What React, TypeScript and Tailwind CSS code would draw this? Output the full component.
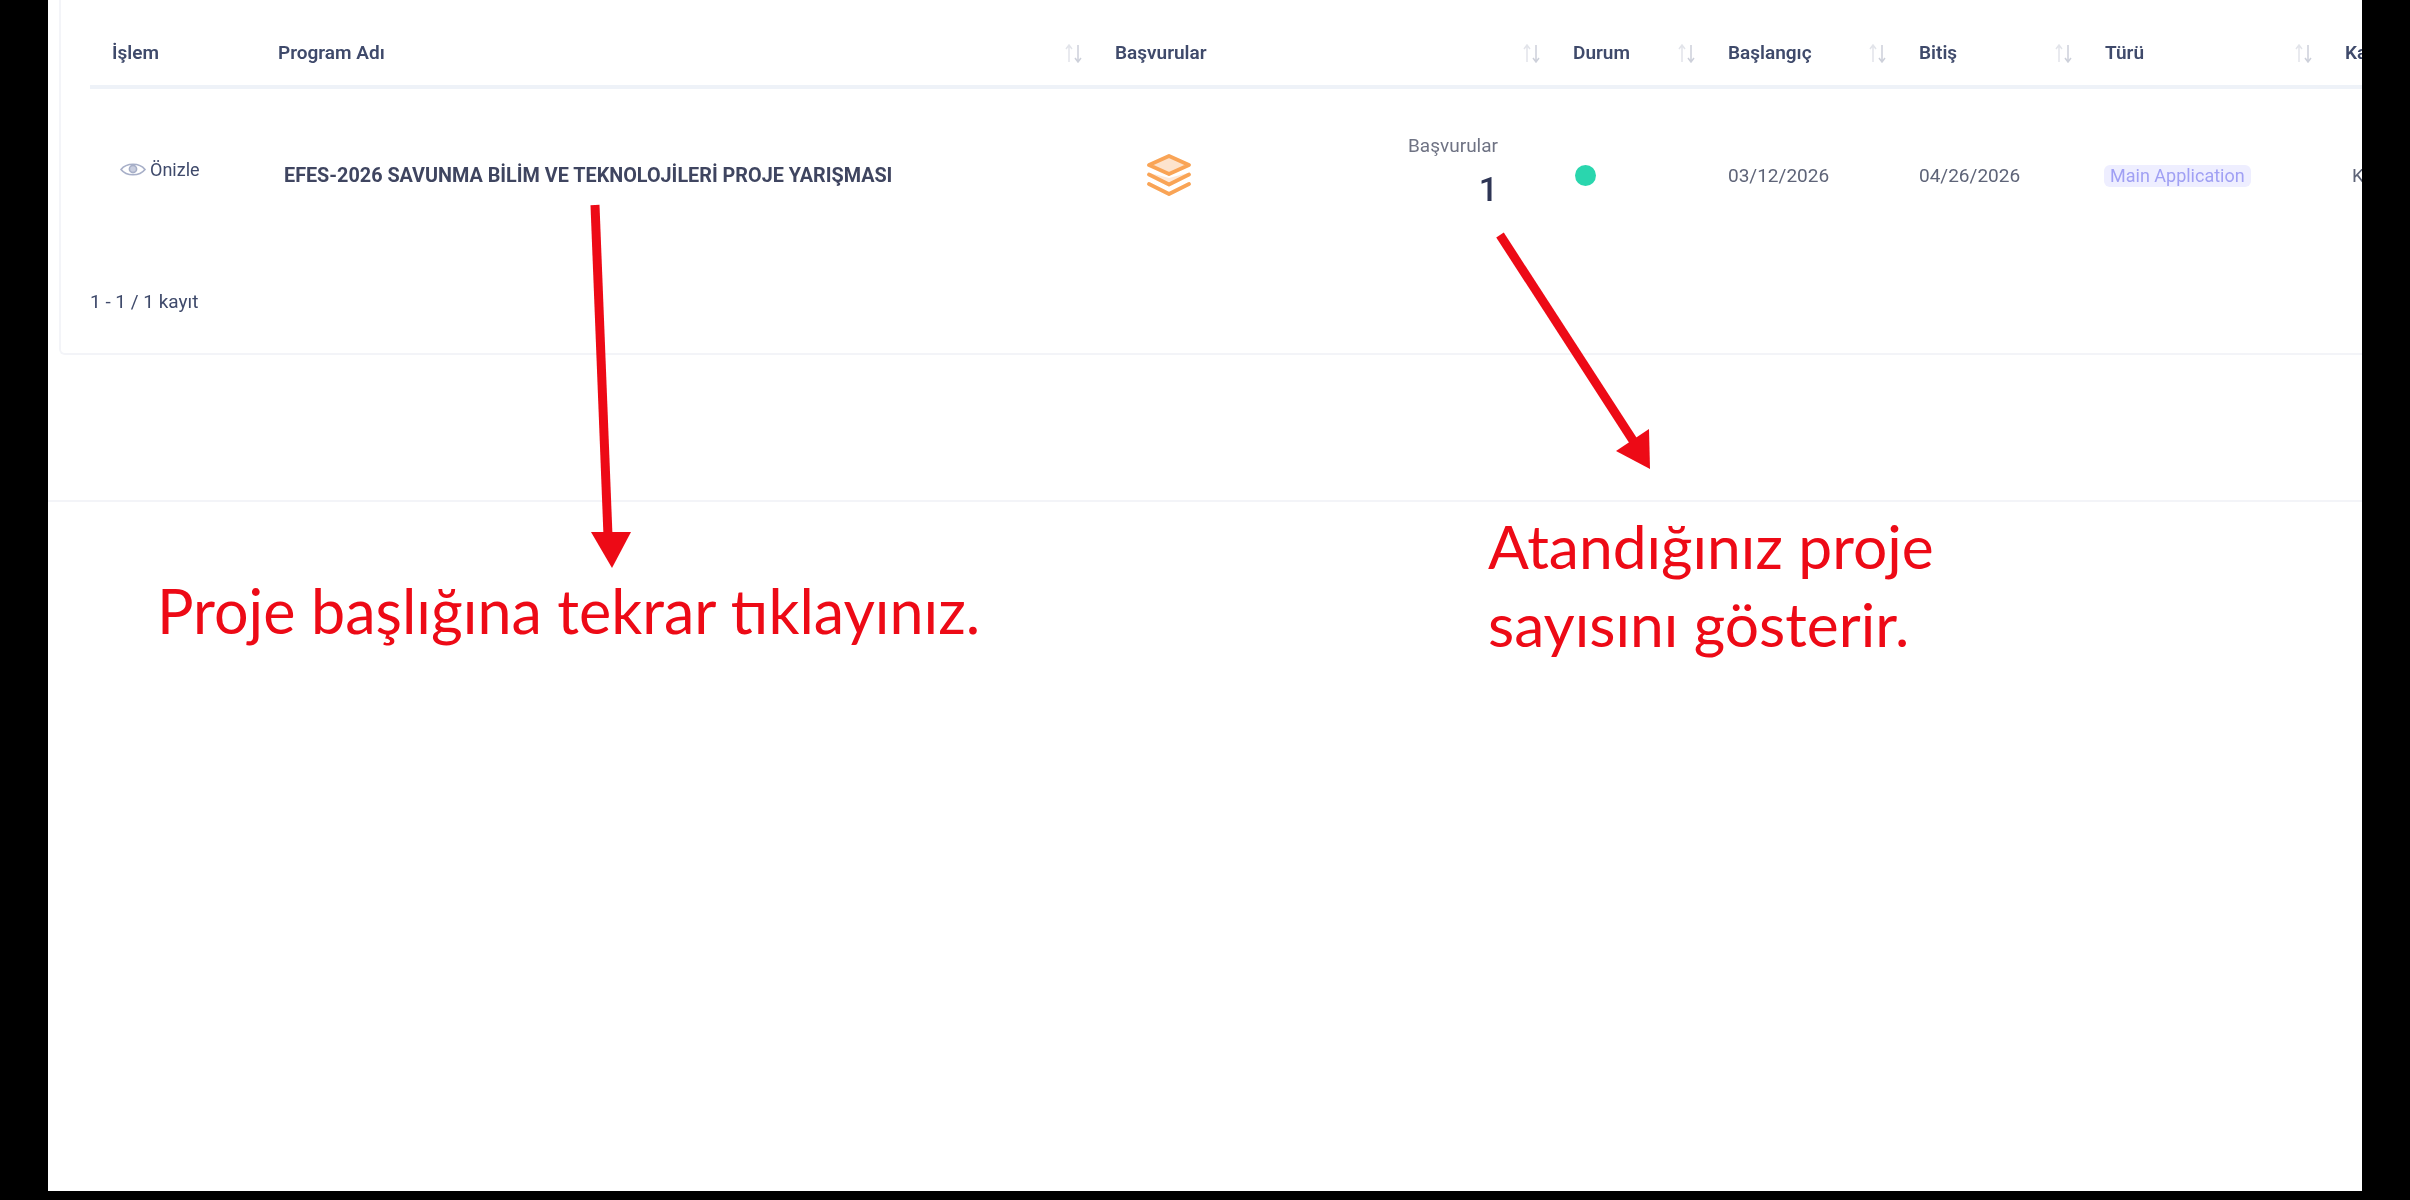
const columns = [
  { label: "İşlem", width: "w-[166px]" },
  { label: "Program Adı", width: "w-[837px]", sortable: true },
  { label: "Başvurular", width: "w-[458px]", sortable: true },
  { label: "Durum", width: "w-[155px]", sortable: true },
  { label: "Başlangıç", width: "w-[191px]", sortable: true },
  { label: "Bitiş", width: "w-[186px]", sortable: true },
  { label: "Türü", width: "w-[240px]", sortable: true },
  { label: "Ka", width: "w-[120px]" },
]

function SortIcon() {
  return (
    <svg width="18" height="19" viewBox="0 0 18 19" fill="none" strokeWidth="1.5">
      <path d="M4 18V2M1 5l3-4 3 4" stroke="#e2e4ea" />
      <path d="M13 1v16M10 14l3 4 3-4" stroke="#cdd0da" />
    </svg>
  )
}

function EyeIcon() {
  return (
    <svg width="26" height="15" viewBox="0 0 26 15" fill="none" stroke="#a7afc8">
      <path d="M1 7.5C6.5 0.5 19.5 0.5 25 7.5C19.5 14.5 6.5 14.5 1 7.5Z" strokeWidth="1.6" />
      <circle cx="13" cy="7" r="3.6" fill="#c9cedf" strokeWidth="1.6" />
    </svg>
  )
}

function LayersIcon() {
  return (
    <svg width="44" height="42" viewBox="0 0 44 42" fill="none" stroke="#f9a456" strokeWidth="3.8" strokeLinejoin="round" strokeLinecap="round">
      <path d="M22 24l-19-5 19 11 19-11z" fill="#fdeadb" stroke="none" />
      <path d="M22 2L42 11 22 20 2 11Z" fill="#fde3cd" />
      <path d="M2 20.5L22 30.5 42 20.5" />
      <path d="M2 30L22 40 42 30" />
    </svg>
  )
}

function Arrows() {
  return (
    <svg className="absolute left-[-48px] top-0 pointer-events-none" width="2410" height="1200" viewBox="0 0 2410 1200" fill="none">
      <path d="M595 205L608 536" stroke="#ed0a16" strokeWidth="9" />
      <path d="M591 532H631L612 568Z" fill="#ed0a16" />
      <path d="M1500 235L1634 442" stroke="#ed0a16" strokeWidth="9" />
      <path d="M1649 429L1650 469L1616 451Z" fill="#ed0a16" />
    </svg>
  )
}

export default function App() {
  return (
    <div className="h-[1200px] w-[2410px] overflow-hidden bg-black pb-[9px] pl-12 pr-12 font-['Roboto',sans-serif]">
      <div className="relative h-full overflow-hidden bg-white">
        <div className="ml-[11px] h-[355px] rounded-bl-md border-b-2 border-l-2 border-[#f3f4f8] pl-[29px]">
          <div className="blur-[0.4px]">
            <table className="w-[2353px] table-fixed border-collapse">
              <thead>
                <tr className="h-[87px] border-b-4 border-[#eef2f8] text-[19px] text-[#3f4a6b]">
                  {columns.map((col) => (
                    <th key={col.label} className={`${col.width} p-0 pt-[21px] text-left font-semibold`}>
                      <div className="flex items-center justify-between pl-[22px] pr-[10px]">
                        <span>{col.label}</span>
                        {col.sortable && <SortIcon />}
                      </div>
                    </th>
                  ))}
                </tr>
              </thead>
              <tbody>
                <tr className="h-[176px] text-[19px] text-[#5e6478]">
                  <td className="p-0 pb-[14px] pl-[30px]">
                    <div className="flex items-center gap-[4px] text-[18px] text-[#3f4a6b]">
                      <EyeIcon />
                      <span>Önizle</span>
                    </div>
                  </td>
                  <td className="p-0 pl-[28px] text-[19.8px] font-bold text-[#3f4560]">
                    EFES-2026 SAVUNMA BİLİM VE TEKNOLOJİLERİ PROJE YARIŞMASI
                  </td>
                  <td className="p-0 pb-[2px] pl-[54px] pr-[53px]">
                    <div className="flex items-center justify-between">
                      <LayersIcon />
                      <div className="mb-[4px] flex flex-col items-end">
                        <span className="mb-[9px] text-[19px] leading-[22px] text-[#6f7384]">Başvurular</span>
                        <span className="text-[34px] font-medium leading-[46px] text-[#2e3555]">1</span>
                      </div>
                    </div>
                  </td>
                  <td className="p-0 pb-[2px] pl-[24px]">
                    <div className="h-[21px] w-[21px] rounded-full bg-[#2ad6ae]" />
                  </td>
                  <td className="p-0 pl-[22px]">03/12/2026</td>
                  <td className="p-0 pl-[22px]">04/26/2026</td>
                  <td className="p-0 pl-[21px]">
                    <span className="inline-block rounded-md bg-[#eeeeff] px-[6px] text-[18px] leading-[22px] text-[#a0a0f4]">Main Application</span>
                  </td>
                  <td className="p-0 pl-[29px]">K</td>
                </tr>
              </tbody>
            </table>
            <p className="mt-[27px] text-[19px] leading-6 text-[#3f4a6b]">1 - 1 / 1 kayıt</p>
          </div>
        </div>

        <div className="mt-[145px] h-[2px] bg-[#f3f4f8]" />

        <Arrows />
        <p className="absolute left-[109px] top-[575px] font-['Lato',sans-serif] text-[61px] leading-[72px] text-[#ed0a16]">
          Proje başlığına tekrar tıklayınız.
        </p>
        <p className="absolute left-[1440px] top-[507px] font-['Lato',sans-serif] text-[60.5px] leading-[78px] text-[#ed0a16]">
          Atandığınız proje
          <br />
          sayısını gösterir.
        </p>
      </div>
    </div>
  )
}
